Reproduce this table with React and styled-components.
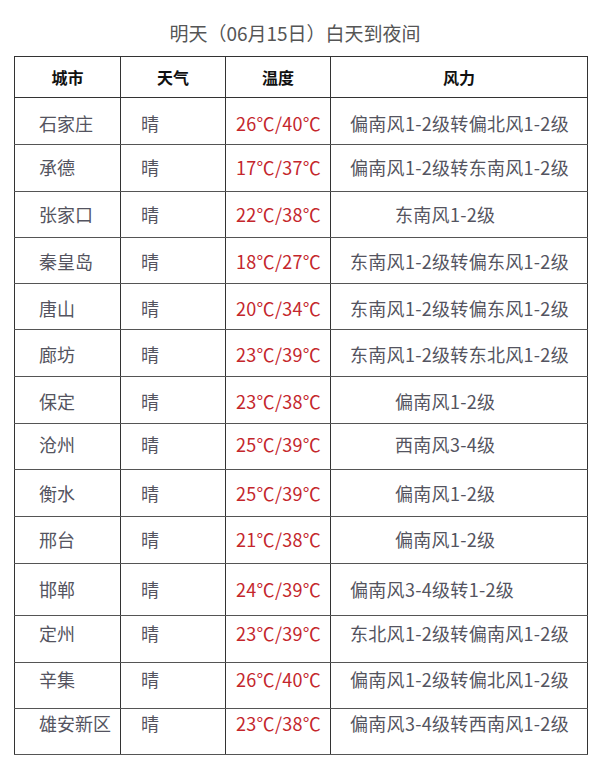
import React from "react";
import styled, { createGlobalStyle } from "styled-components";

const GlobalStyle = createGlobalStyle`
	body {
		margin: 0;
		background: #fff;
		font-family: "Noto Sans CJK SC", "Noto Sans", sans-serif;
	}
`;

const Page = styled.div`
	width: 600px;
	padding: 20px 14px 0;
	box-sizing: border-box;
`;

const Title = styled.h2`
	margin: 0 0 10px;
	padding-right: 10px;
	height: 26px;
	line-height: 26px;
	text-align: center;
	font-size: 19px;
	font-weight: 400;
	color: #555;
`;

const Table = styled.table`
	width: 573px;
	border-collapse: collapse;
	table-layout: fixed;
	border: 1px solid #333;
`;

const HeadCell = styled.th`
	height: 40px;
	padding: 0;
	border: 1px solid #333;
	font-size: 16px;
	font-weight: 700;
	color: #111;
	text-align: center;
	vertical-align: middle;
`;

const Row = styled.tr`
	height: ${({ $h }) => $h}px;
`;

const Cell = styled.td`
	padding: ${({ $pt }) => $pt}px 0 0 ${({ $indent }) => $indent}px;
	border-left: 1px solid #333;
	border-right: 1px solid #333;
	border-bottom: 1px solid #555;
	font-size: 18px;
	line-height: 26px;
	letter-spacing: ${({ $wide }) => ($wide ? "0.3px" : "0")};
	color: ${({ $red }) => ($red ? "#c4262c" : "#545460")};
	vertical-align: top;
	white-space: nowrap;
	box-sizing: border-box;
`;

const rows = [
	["石家庄", "26℃/40℃", "偏南风1-2级转偏北风1-2级", 47, 12, false],
	["承德", "17℃/37℃", "偏南风1-2级转东南风1-2级", 47, 9, false],
	["张家口", "22℃/38℃", "东南风1-2级", 46, 9, true],
	["秦皇岛", "18℃/27℃", "东南风1-2级转偏东风1-2级", 46, 10, false],
	["唐山", "20℃/34℃", "东南风1-2级转偏东风1-2级", 46, 11, false],
	["廊坊", "23℃/39℃", "东南风1-2级转东北风1-2级", 47, 11, false],
	["保定", "23℃/38℃", "偏南风1-2级", 47, 11, true],
	["沧州", "25℃/39℃", "西南风3-4级", 46, 7, true],
	["衡水", "25℃/39℃", "偏南风1-2级", 47, 10, true],
	["邢台", "21℃/38℃", "偏南风1-2级", 47, 9, true],
	["邯郸", "24℃/39℃", "偏南风3-4级转1-2级", 52, 12, false],
	["定州", "23℃/39℃", "东北风1-2级转偏南风1-2级", 47, 4, false],
	["辛集", "26℃/40℃", "偏南风1-2级转偏北风1-2级", 46, 3, false],
	["雄安新区", "23℃/38℃", "偏南风3-4级转西南风1-2级", 46, 1, false],
];

export default function App() {
	return (
		<Page>
			<GlobalStyle />
			<Title>明天（06月15日）白天到夜间</Title>
			<Table>
				<colgroup>
					<col style={{ width: 106 }} />
					<col style={{ width: 105 }} />
					<col style={{ width: 105 }} />
					<col style={{ width: 257 }} />
				</colgroup>
				<thead>
					<tr>
						<HeadCell>城市</HeadCell>
						<HeadCell>天气</HeadCell>
						<HeadCell>温度</HeadCell>
						<HeadCell>风力</HeadCell>
					</tr>
				</thead>
				<tbody>
					{rows.map(([city, temp, wind, h, pt, short]) => (
						<Row key={city} $h={h}>
							<Cell $pt={pt} $indent={24}>{city}</Cell>
							<Cell $pt={pt} $indent={20}>晴</Cell>
							<Cell $pt={pt} $indent={10} $red $wide>{temp}</Cell>
							<Cell $pt={pt} $indent={short ? 64 : 19} $wide>{wind}</Cell>
						</Row>
					))}
				</tbody>
			</Table>
		</Page>
	);
}
